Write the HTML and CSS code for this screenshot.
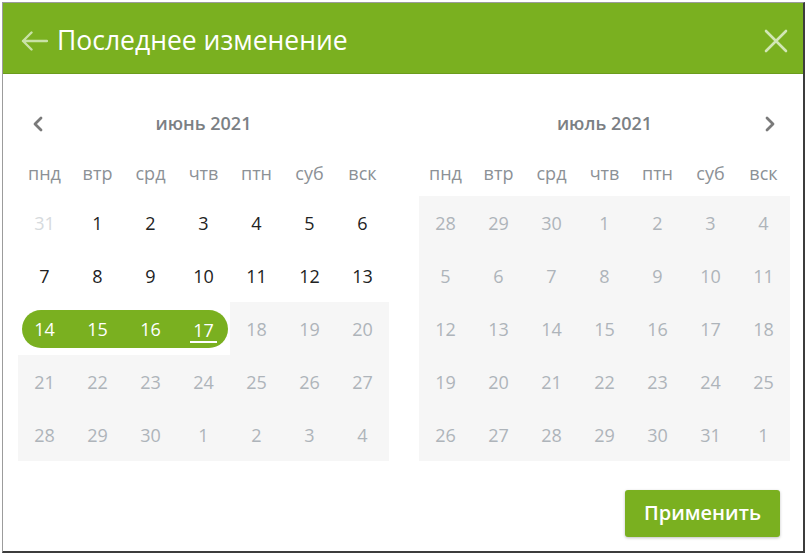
FILE: index.html
```html
<!DOCTYPE html>
<html lang="ru">
<head>
<meta charset="utf-8">
<title>Последнее изменение</title>
<link rel="stylesheet" href="styles.css">
</head>
<body>
<div class="dialog">
  <div class="header">
    <svg class="back" width="28" height="20" viewBox="0 0 28 20"><path d="M27 10H3M11.5 1.5L3 10l8.5 8.5" fill="none" stroke="currentColor" stroke-width="2.4" stroke-linecap="round" stroke-linejoin="round"/></svg>
    <div class="title">Последнее изменение</div>
    <svg class="close" width="24" height="24" viewBox="0 0 24 24"><path d="M2 2L22 22M22 2L2 22" fill="none" stroke="currentColor" stroke-width="2.6" stroke-linecap="round"/></svg>
  </div>
  <div class="body">
    <div class="calendars">
      <div class="month">
        <div class="month-head">
          <svg class="nav prev" width="12" height="16" viewBox="0 0 12 16"><path d="M9 2L3 8l6 6" fill="none" stroke="currentColor" stroke-width="2.8" stroke-linecap="round" stroke-linejoin="round"/></svg>
          <div class="month-title">июнь 2021</div>
        </div>
        <div class="grid">
          <div class="wd">пнд</div><div class="wd">втр</div><div class="wd">срд</div><div class="wd">чтв</div><div class="wd">птн</div><div class="wd">суб</div><div class="wd">вск</div>
          <div class="day other">31</div><div class="day">1</div><div class="day">2</div><div class="day">3</div><div class="day">4</div><div class="day">5</div><div class="day">6</div>
          <div class="day">7</div><div class="day">8</div><div class="day">9</div><div class="day">10</div><div class="day">11</div><div class="day">12</div><div class="day">13</div>
          <div class="day sel start"><span class="seg">14</span></div><div class="day sel"><span class="seg">15</span></div><div class="day sel"><span class="seg">16</span></div><div class="day sel end"><span class="seg"><span class="today">17</span></span></div><div class="day off">18</div><div class="day off">19</div><div class="day off">20</div>
          <div class="day off">21</div><div class="day off">22</div><div class="day off">23</div><div class="day off">24</div><div class="day off">25</div><div class="day off">26</div><div class="day off">27</div>
          <div class="day off">28</div><div class="day off">29</div><div class="day off">30</div><div class="day off">1</div><div class="day off">2</div><div class="day off">3</div><div class="day off">4</div>
        </div>
      </div>
      <div class="month">
        <div class="month-head">
          <div class="month-title">июль 2021</div>
          <svg class="nav next" width="12" height="16" viewBox="0 0 12 16"><path d="M3 2l6 6-6 6" fill="none" stroke="currentColor" stroke-width="2.8" stroke-linecap="round" stroke-linejoin="round"/></svg>
        </div>
        <div class="grid">
          <div class="wd">пнд</div><div class="wd">втр</div><div class="wd">срд</div><div class="wd">чтв</div><div class="wd">птн</div><div class="wd">суб</div><div class="wd">вск</div>
          <div class="day off">28</div><div class="day off">29</div><div class="day off">30</div><div class="day off">1</div><div class="day off">2</div><div class="day off">3</div><div class="day off">4</div>
          <div class="day off">5</div><div class="day off">6</div><div class="day off">7</div><div class="day off">8</div><div class="day off">9</div><div class="day off">10</div><div class="day off">11</div>
          <div class="day off">12</div><div class="day off">13</div><div class="day off">14</div><div class="day off">15</div><div class="day off">16</div><div class="day off">17</div><div class="day off">18</div>
          <div class="day off">19</div><div class="day off">20</div><div class="day off">21</div><div class="day off">22</div><div class="day off">23</div><div class="day off">24</div><div class="day off">25</div>
          <div class="day off">26</div><div class="day off">27</div><div class="day off">28</div><div class="day off">29</div><div class="day off">30</div><div class="day off">31</div><div class="day off">1</div>
        </div>
      </div>
    </div>
    <div class="footer">
      <button class="apply">Применить</button>
    </div>
  </div>
</div>
</body>
</html>
```
FILE: styles.css
```css
html, body {
  margin: 0;
  padding: 0;
  background: #ffffff;
}
body {
  font-family: "Open Sans", "Liberation Sans", sans-serif;
}
.dialog {
  margin: 2px 0 0 2px;
  width: 800px;
  height: 548px;
  border-left: 1px solid #9c9c9c;
  border-top: 1px solid #9c9c9c;
  border-right: 2px solid #3c3c3c;
  border-bottom: 2px solid #3c3c3c;
  background: #fff;
  display: flex;
  flex-direction: column;
}
.header {
  height: 71px;
  box-sizing: border-box;
  background: #7ab020;
  border-bottom: 1px solid #6b9c1c;
  display: flex;
  align-items: center;
  padding: 5px 15px 0 17px;
  color: #fff;
}
.back {
  color: #c9e2a6;
  margin-right: 9px;
}
.title {
  flex: 1;
  font-size: 26.5px;
  line-height: 36px;
  color: #ffffff;
  padding-bottom: 2px;
}
.close {
  color: #d2e7b5;
}
.body {
  flex: 1;
  display: flex;
  flex-direction: column;
  padding: 27px 13px 0 15px;
}
.calendars {
  display: flex;
  gap: 30px;
}
.month {
  width: 371px;
}
.month-head {
  height: 46px;
  display: grid;
  grid-template-columns: 40px 1fr 40px;
  align-items: center;
}
.month-title {
  grid-column: 2;
  grid-row: 1;
  text-align: center;
  font-size: 18px;
  font-weight: 600;
  color: #7b8084;
  padding-bottom: 2px;
}
.nav {
  color: #7a7a7a;
  justify-self: center;
  grid-row: 1;
}
.prev { grid-column: 1; }
.next { grid-column: 3; }
.grid {
  display: grid;
  grid-template-columns: repeat(7, 53px);
  grid-template-rows: 49px;
  grid-auto-rows: 53px;
}
.grid .wd {
  display: flex;
  align-items: center;
  justify-content: center;
  font-size: 18px;
  color: #8c9196;
  padding-top: 2px;
}
.day {
  display: flex;
  align-items: center;
  justify-content: center;
  font-size: 18px;
  color: #222;
}
.day.other {
  color: #d6dadd;
}
.day.off {
  background: #f6f6f6;
  color: #aeb4ba;
}
.day.sel {
  align-items: stretch;
  padding: 8px 0 7px;
}
.seg {
  flex: 1;
  background: #7ab020;
  color: #fff;
  display: flex;
  align-items: center;
  justify-content: center;
}
.start .seg {
  margin-left: 4px;
  padding-right: 4px;
  border-radius: 19px 0 0 19px;
}
.end .seg {
  margin-right: 2px;
  padding-left: 2px;
  border-radius: 0 19px 19px 0;
}
.today {
  display: inline-block;
  padding: 0 3px;
  line-height: 22px;
  border-bottom: 2px solid #fff;
  margin-top: 4px;
}
.footer {
  display: flex;
  justify-content: flex-end;
  padding: 29px 10px 0 0;
}
.apply {
  width: 155px;
  height: 47px;
  border: none;
  border-radius: 3px;
  background: #7ab020;
  color: #fff;
  font-family: "Open Sans", "Liberation Sans", sans-serif;
  font-size: 20px;
  font-weight: 600;
  box-shadow: 0 1px 3px rgba(0,0,0,0.25);
  padding: 0 0 2px;
}
```
